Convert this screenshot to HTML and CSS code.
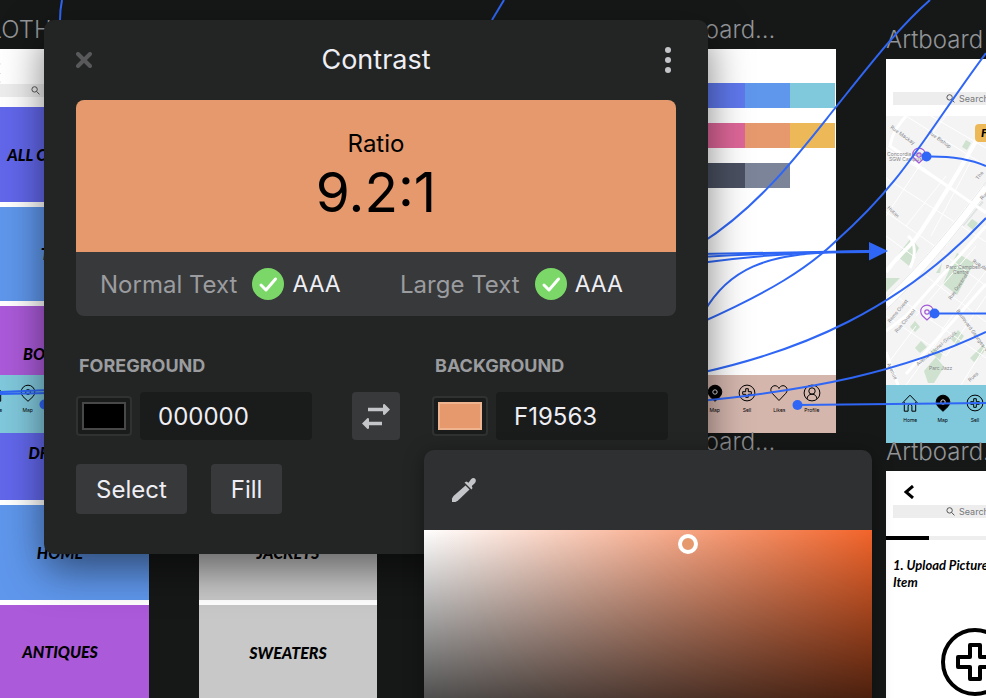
FILE: index.html
```html
<!DOCTYPE html>
<html lang="en">
<head>
<meta charset="utf-8">
<title>Contrast</title>
<link rel="stylesheet" href="styles.css">
</head>
<body>
<svg class="symbols" aria-hidden="true">
  <symbol id="i-search" viewBox="0 0 9 9"><circle cx="3.6" cy="3.4" r="2.7"/><path d="M5.6 5.4 8.4 8.4"/></symbol>
  <symbol id="i-home" viewBox="0 0 18 18"><path d="M1 9.5 9 1.2l8 8.3M3.3 8v9.2h3.8v-5a1.9 1.9 0 0 1 3.8 0v5h3.8V8"/></symbol>
  <symbol id="i-map" viewBox="0 0 18 18"><path d="M9 17.3 4 12.6a6.8 6.8 0 1 1 10 0z"/><circle cx="9" cy="8" r="2.4"/></symbol>
  <symbol id="i-map-solid" viewBox="0 0 18 18"><path fill="#000" d="M9 17.3 4 12.6a6.8 6.8 0 1 1 10 0z"/><circle cx="9" cy="8" r="2.2" stroke="#ddd"/></symbol>
  <symbol id="i-sell" viewBox="0 0 18 18"><circle cx="9" cy="9" r="7.9"/><path d="M7.7 4.7h2.6v3h3v2.6h-3v3H7.7v-3h-3V7.700h3z"/></symbol>
  <symbol id="i-like" viewBox="0 0 18 18"><path d="M9 16.500 2.200 9.300C-1 5.500 2 1.600 5 1.700c2 0 3.200 1.200 4 2.800.8-1.600 2-2.800 4-2.800 3-.1 6 3.800 2.800 7.600z"/></symbol>
  <symbol id="i-user" viewBox="0 0 18 18"><circle cx="9" cy="9" r="7.900"/><circle cx="9" cy="7" r="3.200"/><path d="M4 15c.3-3 2-4.800 5-4.800s4.700 1.800 5 4.800"/></symbol>
  <symbol id="i-ok" viewBox="0 0 32 32"><circle cx="16" cy="16" r="16" fill="#7bd868"/><path d="m9 17 5 5L23.500 11" fill="none" stroke="#fff" stroke-width="3" stroke-linecap="round" stroke-linejoin="round"/></symbol>
</svg>

<main class="canvas">
  <section class="board board-clothing">
    <h2 class="board-name">CLOTHING</h2>
    <div class="page">
      <svg class="menu" viewBox="0 0 18 22"><path d="M0 1h18M0 11h18M0 20h18"/></svg>
      <div class="search"><svg><use href="#i-search"/></svg>Search</div>
      <div class="tiles">
        <div class="tile indigo">ALL CLOTHING</div>
        <div class="tile blue">TOPS</div>
        <div class="tile purple">BOTTOMS</div>
        <div class="tile indigo">DRESSES</div>
        <div class="tile blue">HOME</div>
        <div class="tile purple">ANTIQUES</div>
      </div>
      <nav class="tabs teal">
        <span><svg><use href="#i-home"/></svg>Home</span>
        <span><svg><use href="#i-map"/></svg>Map</span>
        <span><svg><use href="#i-sell"/></svg>Sell</span>
        <span><svg><use href="#i-like"/></svg>Likes</span>
        <span><svg><use href="#i-user"/></svg>Profile</span>
      </nav>
    </div>
  </section>

  <section class="board board-outer">
    <div class="page">
      <div class="tiles two">
        <div class="tile grey">JACKETS</div>
        <div class="tile grey">SWEATERS</div>
      </div>
    </div>
  </section>

  <section class="board board-colors">
    <h2 class="board-name">Artboard…</h2>
    <div class="page">
      <div class="palette">
        <i class="indigo"></i><i class="royal"></i><i class="blue"></i><i class="teal"></i>
        <i class="purple"></i><i class="pink"></i><i class="orange"></i><i class="gold"></i>
        <i class="ink"></i><i class="slate"></i><i class="steel"></i>
      </div>
      <nav class="tabs blush">
        <span><svg><use href="#i-home"/></svg>Home</span>
        <span><svg><use href="#i-map-solid"/></svg>Map</span>
        <span><svg><use href="#i-sell"/></svg>Sell</span>
        <span><svg><use href="#i-like"/></svg>Likes</span>
        <span><svg><use href="#i-user"/></svg>Profile</span>
      </nav>
    </div>
  </section>

  <section class="board board-next">
    <h2 class="board-name">Artboard…</h2>
  </section>

  <section class="board board-map">
    <h2 class="board-name">Artboard</h2>
    <div class="page">
      <div class="search"><svg><use href="#i-search"/></svg>Search</div>
      <div class="map">
        <svg class="map-art" viewBox="0 0 178 269">
          <rect width="178" height="269" fill="#f4f4f4"/>
          <g fill="#cfe2cf">
            <path d="m80 24 5 3-4 7-5-3zM86 103l6 4-5 7-6-5zM25 122l8 10-10 18-12-10zM71 137l17 10-17 32-14-11zM0 162h14L0 176zM29 205l5 6-5 5-5-5zM35 225l6 6-7 6-5-5zM72 214l6 6-7 10-6-7zM50 157l6-10-2 10zM38 255l12-14 8 10-10 16H42zM44 236l10 8 3-8-8-4zM84 242l14-14v8L88 246z"/>
          </g>
          <g fill="none" stroke="#dfe2e2" stroke-width="7"><path d="M75 108 95 84"/></g>
          <g fill="none" stroke="#fff" stroke-width="1">
            <path d="M0 32 100 95M0 62l100 64M20 0l80 50M45 0l60 35M0 96l60 42M0 120l30 22M60 60 20 110M40 40 0 100M85 45 45 120M100 70 60 130M0 200l60 40M10 180l90 62M40 160l60 46M60 140l40 30M90 130 30 200M100 155 55 215M100 180 60 240M70 200 20 269M0 250l30-40M75 269l25-40M60 0 40 25"/>
          </g>
          <g fill="none" stroke="#fff">
            <path stroke-width="4" d="M98 10C80 45 48 95 35 115S15 135 0 156"/>
            <path stroke-width="9" d="M100 72C75 105 40 150 0 188"/>
            <path stroke="#e7e9e9" stroke-width="1" d="M100 66C75 99 40 144 0 182M100 78C75 111 40 156 0 194"/>
            <path stroke-width="3" d="M20 0C10 12 6 18 4 30l96 67M0 215l20-15L100 110M20 258 100 168M0 236l12 33M22 120c8 6 8 20 2 32"/>
          </g>
          <g class="streets">
            <text transform="translate(4 12) rotate(36)">Rue Mackay</text>
            <text transform="translate(42 17) rotate(36)">Rue Bishop</text>
            <text x="1" y="40">Concordia Uni</text>
            <text x="3" y="45">SGW Campus</text>
            <text transform="translate(92 64) rotate(-50)">The</text>
            <text transform="translate(96 84) rotate(-45)">Rue</text>
            <text transform="translate(1 92) rotate(45)">Hutan</text>
            <text x="60" y="153">Parc Campbell-</text>
            <text x="67" y="158">Centre</text>
            <text transform="translate(86 146) rotate(32)">Rue des S</text>
            <text transform="translate(65 184) rotate(-56)">Rue Quesnel</text>
            <text transform="translate(4 207) rotate(-50)">Rems Ouest</text>
            <text transform="translate(11 217) rotate(-50)">Rue Coursol</text>
            <text transform="translate(70 195) rotate(54)">Boulevard Georges-Vanier</text>
            <text transform="translate(32 250) rotate(-40)">Avenue Lionel-Groulx</text>
            <text x="43" y="254">Parc Jazz</text>
            <text transform="translate(1 248) rotate(65)">Avenue</text>
            <text transform="translate(84 266) rotate(-42)">Rues</text>
          </g>
          <g fill="none" stroke="#a45ad6" stroke-width="1.200">
            <path d="m33 47-4.500-4.200a6.300 6.300 0 1 1 9 0z"/><circle cx="33" cy="39" r="2.200"/>
            <path d="m41 204-4.500-4.200a6.300 6.300 0 1 1 9 0z"/><circle cx="41" cy="196" r="2.200"/>
          </g>
        </svg>
        <button class="filter" type="button">Filter</button>
      </div>
      <nav class="tabs teal">
        <span><svg><use href="#i-home"/></svg>Home</span>
        <span><svg><use href="#i-map-solid"/></svg>Map</span>
        <span><svg><use href="#i-sell"/></svg>Sell</span>
        <span><svg><use href="#i-like"/></svg>Likes</span>
        <span><svg><use href="#i-user"/></svg>Profile</span>
      </nav>
    </div>
  </section>

  <section class="board board-upload">
    <h2 class="board-name">Artboard…</h2>
    <div class="page">
      <svg class="back" viewBox="0 0 10 14"><path d="M9 1 2 7l7 6"/></svg>
      <div class="search"><svg><use href="#i-search"/></svg>Search</div>
      <div class="progress"><i></i></div>
      <p class="step">1. Upload Pictures of Item</p>
      <svg class="add" viewBox="0 0 68 68"><circle cx="34" cy="34" r="32"/><path d="M29 17h10v12h12v10H39v12H29V39H17V29h12z"/></svg>
    </div>
  </section>

  <svg class="wires" width="986" height="698" viewBox="0 0 986 698">
    <g fill="none" stroke="#2f66f5" stroke-width="2">
      <path d="M62 0Q60 10 60 20"/>
      <path d="M504 0 492 20"/>
      <path d="M700 244C760 206 800 152 836 107S900 26 930 0"/>
      <path d="M700 323C770 292 808 268 836 241C905 180 925 135 986 53"/>
      <path d="M700 373C800 351 900 310 986 218"/>
      <path d="M700 401C810 390 900 373 986 332"/>
      <path d="M797 405 986 403"/>
      <path d="M934 313.500h52"/>
      <path d="M926 156.500C950 156 970 159 986 166"/>
      <path d="M700 254 870 251"/>
      <path d="M700 257C750 254 800 252 870 252"/>
      <path d="M700 263C750 256 800 252 870 251"/>
      <path d="M704 312C728 270 765 253 840 252"/>
      <path d="M0 392 50 390M0 394 50 393"/>
    </g>
    <g fill="#2f66f5">
      <path d="M869 242v18.500l19-9.500z"/>
      <circle cx="797.500" cy="405" r="5"/>
      <circle cx="934.500" cy="313.500" r="5"/>
      <circle cx="926.500" cy="156.500" r="5"/>
      <circle cx="44.500" cy="404.500" r="5"/>
    </g>
  </svg>

  <section class="panel" aria-label="Contrast">
    <header class="panel-head">
      <button class="icon-btn" type="button" aria-label="Close"><svg width="16" height="16" viewBox="0 0 16 16"><path d="M2 2l12 12M14 2 2 14" stroke="#59595b" stroke-width="4" stroke-linecap="round"/></svg></button>
      <h1>Contrast</h1>
      <button class="icon-btn" type="button" aria-label="More"><svg width="16" height="26" viewBox="0 0 16 26" fill="#c4c5c8"><circle cx="8" cy="3" r="3"/><circle cx="8" cy="13" r="3"/><circle cx="8" cy="23" r="3"/></svg></button>
    </header>

    <div class="card">
      <div class="ratio"><span>Ratio</span><strong>9.2:1</strong></div>
      <div class="grades">
        <div><span>Normal Text</span><svg><use href="#i-ok"/></svg><b>AAA</b></div>
        <div><span>Large Text</span><svg><use href="#i-ok"/></svg><b>AAA</b></div>
      </div>
    </div>

    <div class="fields">
      <div class="field">
        <label for="fg">FOREGROUND</label>
        <div class="field-row">
          <button class="swatch" type="button" aria-label="Pick foreground"><i class="black"></i></button>
          <input id="fg" type="text" value="000000">
        </div>
      </div>
      <button class="swap" type="button" aria-label="Swap colors"><svg width="30" height="26" viewBox="0 0 30 26"><path d="M7 6.500h15M6 20.500h15" stroke="#c4c5c8" stroke-width="3.500"/><path d="M22 1.500 23.500 1l5.500 5.500-5.500 5.500-1.500-.5zM8 15.500 6.500 15 1 20.500 6.500 26l1.500-.5z" fill="#c4c5c8"/></svg></button>
      <div class="field">
        <label for="bg">BACKGROUND</label>
        <div class="field-row">
          <button class="swatch" type="button" aria-label="Pick background"><i class="peach"></i></button>
          <input id="bg" type="text" value="F19563">
        </div>
      </div>
    </div>

    <div class="actions">
      <button type="button">Select</button>
      <button type="button">Fill</button>
    </div>

    <div class="picker">
      <div class="picker-head">
        <button class="icon-btn" type="button" aria-label="Eyedropper"><svg width="26" height="26" viewBox="0 0 26 26" fill="#c4c5c8"><path d="m14.500 8.500 4 4L7 23.500 4.500 25H1v-3.500l1.500-2.500z"/><path d="m13.500 5.500 2-1 2 1.200 2.500-3.500c3-3 6.500.3 4 3.700l-3.200 3 .7 2-1 1.700z"/></svg></button>
      </div>
      <div class="spectrum"><span class="handle"></span></div>
    </div>
  </section>
</main>
</body>
</html>
```
FILE: styles.css
```css
* { box-sizing: border-box; }
body {
  margin: 0;
  background: #161817;
  font-family: Inter, "Liberation Sans", sans-serif;
}
button, input { font: inherit; color: inherit; border: 0; margin: 0; }
button { padding: 0; background: none; }
h1, h2, p { margin: 0; font-weight: 400; }
.symbols { position: absolute; width: 0; height: 0; }

.canvas { position: relative; height: 100vh; overflow: hidden; }

/* Artboards are placed freely on the canvas */
.board { position: absolute; width: 178px; }
.board-clothing { left: -29px; top: 11px; }
.board-outer { left: 199px; top: 505px; }
.board-colors { left: 658px; top: 11px; }
.board-next { left: 658px; top: 423px; }
.board-map { left: 886px; top: 21px; }
.board-upload { left: 886px; top: 433px; }
.board-name {
  height: 38px;
  line-height: 38px;
  font-size: 24px;
  font-weight: 300;
  white-space: nowrap;
  color: #939497;
}
.page { position: relative; background: #fff; }
.page > svg { display: block; fill: none; stroke: #000; }

.search {
  display: flex;
  align-items: center;
  gap: 4px;
  height: 13px;
  margin: 0 7px;
  padding-left: 53px;
  background: #ededed;
  color: #77787a;
  font-size: 9px;
  line-height: 13px;
}
.search svg { width: 9px; height: 9px; fill: none; stroke: #555; }

.board-clothing .page { padding-top: 14px; }
.page > .menu { width: 18px; height: 21px; margin-left: 12px; stroke: #c8c8cc; }
.tiles { display: grid; grid-template-rows: repeat(6, 1fr); gap: 5px; height: 592px; margin-top: 10px; }
.tiles.two { grid-template-rows: repeat(2, 95px); height: auto; margin: 0; }
.tile {
  display: flex;
  align-items: center;
  justify-content: center;
  font-family: Lato, sans-serif;
  font-size: 16px;
  font-weight: 900;
  font-style: italic;
}
.indigo { background: #6267eb; }
.royal { background: #5f78ec; }
.blue { background: #5f97ec; }
.purple { background: #ab5ad9; }
.grey { background: #c8c8c8; }
.teal { background: #80c8dc; }
.blush { background: #d4b6ad; }
.pink { background: #dd6698; }
.orange { background: #e5996d; }
.gold { background: #edb958; }
.ink { background: #353a48; }
.slate { background: #4a5061; }
.steel { background: #7b8498; }

.tabs {
  display: grid;
  grid-template-columns: repeat(5, 1fr);
  height: 58px;
  padding: 9px 8px 0;
  font-size: 5px;
  line-height: 6px;
  text-align: center;
}
.tabs span { display: flex; flex-direction: column; align-items: center; gap: 5px; }
.tabs svg { width: 18px; height: 18px; fill: none; stroke: #000; stroke-width: 1; }
.board-clothing .tabs { position: absolute; left: 0; right: 0; top: 326px; }

.palette {
  display: grid;
  grid-template-columns: repeat(4, 45px);
  grid-auto-rows: 25px;
  justify-content: end;
  row-gap: 15px;
  height: 326px;
  padding: 34px 1px 0 0;
  overflow: hidden;
}

.board-map .page { padding-top: 33px; }
.map { position: relative; margin-top: 11px; }
.map-art { display: block; width: 100%; }
.streets { font-size: 5px; fill: #85858a; }
.filter {
  position: absolute;
  left: 89px;
  top: 8px;
  height: 18px;
  padding: 0 6px;
  border-radius: 4px;
  background: #edb958;
  font: italic 900 12px/18px Lato, sans-serif;
}

.board-upload .page { height: 384px; padding-top: 14px; }
.page > .back { width: 10px; height: 14px; margin: 0 0 6px 18px; stroke-width: 3; }
.progress { height: 4px; margin-top: 18px; background: #eee; }
.progress i { display: block; width: 24%; height: 100%; background: #000; }
.step {
  width: 130px;
  margin: 17px 0 37px 7px;
  font: italic 700 13px/17px Lato, sans-serif;
}
.page > .add { width: 68px; height: 68px; margin: 0 auto; stroke-width: 4; stroke-linejoin: round; }

.wires { position: absolute; left: 0; top: 0; }

/* Floating contrast panel */
.panel {
  position: absolute;
  left: 44px;
  top: 20px;
  width: 664px;
  padding: 0 32px 40px;
  border-radius: 10px;
  background: #232524;
  color: #eeeef4;
  box-shadow: 0 16px 40px rgba(0, 0, 0, .5);
}
.panel-head { display: flex; align-items: center; justify-content: space-between; height: 80px; }
.panel-head h1 { font-size: 27px; line-height: 34px; }
.icon-btn { display: flex; }

.card { border-radius: 8px; overflow: hidden; }
.ratio {
  display: flex;
  flex-direction: column;
  align-items: center;
  height: 152px;
  padding-top: 28px;
  background: #e5996d;
  color: #000;
}
.ratio span { font-size: 24px; line-height: 32px; }
.ratio strong { font-size: 55px; line-height: 64px; font-weight: 400; }
.grades { display: grid; grid-template-columns: 1fr 1fr; background: #38393b; font-size: 24px; }
.grades div { display: flex; align-items: center; height: 64px; padding-left: 24px; }
.grades span { color: #9b9c9f; }
.grades svg { width: 32px; height: 32px; margin: 0 8px 0 15px; }
.grades b { font-size: 23px; font-weight: 400; }

.fields { display: flex; align-items: flex-end; margin-top: 38px; }
.field { width: 236px; }
.field label {
  display: block;
  padding-left: 3px;
  margin-bottom: 14px;
  color: #9b9c9f;
  font-size: 18px;
  font-weight: 700;
  line-height: 24px;
}
.field-row { display: flex; align-items: center; gap: 8px; }
.field input {
  flex: 1;
  min-width: 0;
  height: 48px;
  padding: 0 18px;
  border-radius: 4px;
  background: #1a1c1b;
  font-size: 24px;
}
.swatch {
  display: flex;
  width: 56px;
  height: 40px;
  padding: 4px;
  border: 2px solid #303231;
  border-radius: 4px;
  background: #1a1c1b;
}
.swatch i { flex: 1; border: 2px solid #484848; }
.swatch .black { background: #000; }
.swatch .peach { background: #e5996d; border-color: #eeb48f; }
.swap {
  display: flex;
  align-items: center;
  justify-content: center;
  width: 48px;
  height: 48px;
  margin: 0 32px 0 40px;
  border-radius: 4px;
  background: #38393b;
}

.actions { display: flex; gap: 24px; margin-top: 24px; }
.actions button {
  height: 50px;
  padding: 0 20px;
  border-radius: 4px;
  background: #38393b;
  font-size: 24px;
}

.picker {
  position: absolute;
  left: 380px;
  top: 430px;
  width: 448px;
  border-radius: 10px;
  overflow: hidden;
  background: #2f3032;
  box-shadow: 0 4px 20px rgba(0, 0, 0, .4);
}
.picker-head { display: flex; align-items: center; height: 80px; padding-left: 27px; }
.spectrum {
  position: relative;
  height: 244px;
  background:
    linear-gradient(to top, #000, transparent),
    linear-gradient(to right, #fff, #f2642a);
}
.handle {
  position: absolute;
  left: 254px;
  top: 4px;
  width: 20px;
  height: 20px;
  border: 4px solid #fff;
  border-radius: 50%;
  background: #e5996d;
}
```
